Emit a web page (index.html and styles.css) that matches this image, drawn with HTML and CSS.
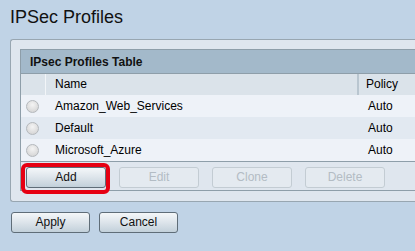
FILE: index.html
```html
<!DOCTYPE html>
<html>
<head>
<meta charset="utf-8">
<link rel="stylesheet" href="styles.css">
</head>
<body>
<h1 class="title">IPSec Profiles</h1>
<div class="panel">
  <div class="table">
    <div class="tbl-title">IPsec Profiles Table</div>
    <div class="row head">
      <div class="c-sel"></div>
      <div class="c-name">Name</div>
      <div class="c-pol">Policy</div>
    </div>
    <div class="row odd">
      <div class="c-sel"><span class="radio"></span></div>
      <div class="c-name">Amazon_Web_Services</div>
      <div class="c-pol">Auto</div>
    </div>
    <div class="row even">
      <div class="c-sel"><span class="radio"></span></div>
      <div class="c-name">Default</div>
      <div class="c-pol">Auto</div>
    </div>
    <div class="row odd">
      <div class="c-sel"><span class="radio"></span></div>
      <div class="c-name">Microsoft_Azure</div>
      <div class="c-pol">Auto</div>
    </div>
    <div class="actions">
      <div class="hl-wrap">
        <button class="btn">Add</button>
        <span class="highlight"></span>
      </div>
      <button class="btn disabled">Edit</button>
      <button class="btn disabled">Clone</button>
      <button class="btn disabled">Delete</button>
    </div>
  </div>
</div>
<div class="footer">
  <button class="btn wide">Apply</button>
  <button class="btn wide">Cancel</button>
</div>
</body>
</html>
```
FILE: styles.css
```css
html, body {
  margin: 0;
  padding: 0;
}
body {
  background: #c0d3e6;
  font-family: "Liberation Sans", Arial, sans-serif;
  font-size: 12px;
  color: #000;
  overflow: hidden;
  width: 415px;
  height: 251px;
}
.title {
  margin: 0;
  padding: 7px 0 0 10px;
  height: 21px;
  line-height: 21px;
  font-size: 18px;
  font-weight: normal;
  color: #111;
}
.panel {
  margin: 11px 0 0 10px;
  width: 405px;
  box-sizing: border-box;
  border: 1px solid #98a6b1;
  border-right: 0;
  border-radius: 3px 0 0 3px;
  background: #dfe6ee;
  padding: 9px 0 10px 9px;
}
.table {
  border-left: 1px solid #8e9ea9;
  border-top: 1px solid #8e9ea9;
  border-bottom: 1px solid #8e9ea9;
  background: #dfe6ee;
}
.tbl-title {
  height: 23px;
  line-height: 24px;
  background: #a3b9ca;
  border-bottom: 1px solid #8e9ea9;
  font-weight: bold;
  padding-left: 9px;
  color: #111;
}
.row {
  display: flex;
  height: 22px;
  line-height: 22px;
}
.row.head {
  height: 21px;
  line-height: 20px;
  background: #dbe3ea;
}
.row.odd { background: #eef2f8; }
.row.even { background: #e2e9f1; }
.c-sel {
  width: 24px;
  flex: none;
  display: flex;
  align-items: center;
  padding-left: 5px;
  box-sizing: border-box;
}
.row.head .c-sel {
  border-right: 1px solid #f2f5f8;
  width: 25px;
}
.c-name {
  width: 314px;
  flex: none;
  padding-left: 10px;
  box-sizing: border-box;
}
.row.head .c-name {
  width: 313px;
  padding-left: 9px;
  border-right: 2px solid #b9c6d0;
}
.c-pol {
  flex: 1;
  padding-left: 9px;
}
.row.head .c-pol { padding-left: 7px; }
.radio {
  display: block;
  width: 11px;
  height: 11px;
  border-radius: 50%;
  border: 1px solid #b4b8bc;
  background: radial-gradient(circle at 50% 35%, #f4f4f4 0%, #dadada 70%, #cfcfcf 100%);
}
.actions {
  display: flex;
  gap: 13px;
  padding: 5px 0 2px 5px;
  height: 21px;
  border-top: 1px solid #8e9ea9;
  background: #dfe6ee;
}
.btn {
  width: 80px;
  height: 21px;
  box-sizing: border-box;
  border: 1px solid #5f6d78;
  border-radius: 3px;
  background: linear-gradient(#f4f7f9 0%, #dfe6ec 45%, #c2d0da 100%);
  font-family: "Liberation Sans", Arial, sans-serif;
  font-size: 12px;
  color: #111;
  padding: 0;
  line-height: 19px;
}
.btn.disabled {
  border-color: #c3ccd3;
  background: #e4eaf0;
  color: #b3bcc4;
}
.hl-wrap {
  position: relative;
  width: 80px;
  height: 21px;
}
.highlight {
  position: absolute;
  left: -5px;
  top: -4px;
  width: 89px;
  height: 31px;
  box-sizing: border-box;
  border: 4px solid #e60012;
  border-radius: 6px;
}
.footer {
  display: flex;
  gap: 9px;
  padding: 10px 0 0 11px;
}
.btn.wide { width: 79px; }
```
